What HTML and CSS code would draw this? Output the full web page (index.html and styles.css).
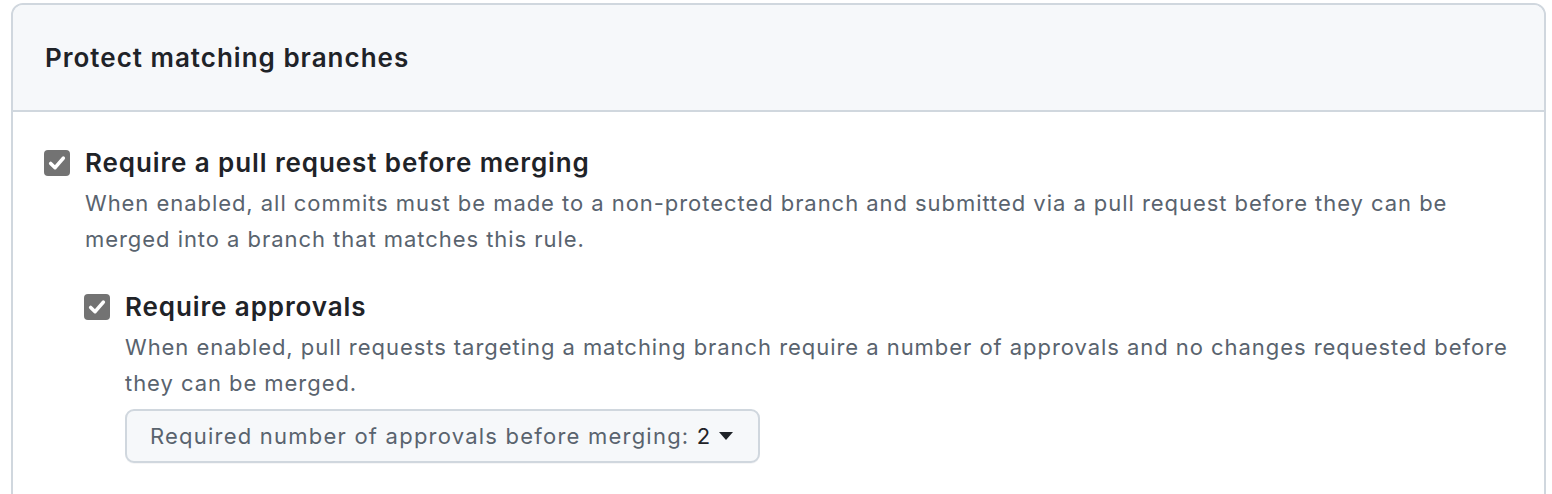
FILE: index.html
```html
<!DOCTYPE html>
<html>
<head>
<meta charset="utf-8">
<link rel="stylesheet" href="styles.css">
</head>
<body>
<div class="box">
  <div class="box-header">
    <h3 class="box-title">Protect matching branches</h3>
  </div>
  <div class="box-body">
    <div class="option">
      <div class="check-row">
        <span class="checkbox"><svg viewBox="0 0 16 16" width="22" height="22"><path d="M3.4 8.3 6.6 11.4 12.6 4.4" fill="none" stroke="#fff" stroke-width="2.6" stroke-linecap="round" stroke-linejoin="round"/></svg></span>
        <span class="option-label">Require a pull request before merging</span>
      </div>
      <p class="note">When enabled, all commits must be made to a non-protected branch and submitted via a pull request before they can be merged into a branch that matches this rule.</p>
      <div class="option nested">
        <div class="check-row">
          <span class="checkbox"><svg viewBox="0 0 16 16" width="22" height="22"><path d="M3.4 8.3 6.6 11.4 12.6 4.4" fill="none" stroke="#fff" stroke-width="2.6" stroke-linecap="round" stroke-linejoin="round"/></svg></span>
          <span class="option-label">Require approvals</span>
        </div>
        <p class="note">When enabled, pull requests targeting a matching branch require a number of approvals and no changes requested before they can be merged.</p>
        <button class="select-btn" type="button"><span class="btn-text">Required number of approvals before merging: <span class="val">2</span></span><span class="caret"></span></button>
      </div>
    </div>
  </div>
</div>
</body>
</html>
```

FILE: styles.css
```css
* { box-sizing: border-box; }
html, body { margin: 0; padding: 0; background: #fff; }
body {
  font-family: Inter, "Noto Sans", "Liberation Sans", sans-serif;
  color: #1f2328;
  overflow: hidden;
}
.box {
  margin: 3px 0 0 11px;
  width: 1535px;
  height: 600px;
  border: 2px solid #d0d7de;
  border-radius: 12px;
  overflow: hidden;
}
.box-header {
  background: #f6f8fa;
  border-bottom: 2px solid #d0d7de;
  height: 107px;
  display: flex;
  align-items: center;
  padding-left: 32px;
}
.box-title {
  margin: 0;
  font-size: 26px;
  font-weight: 600;
  line-height: 36px;
  letter-spacing: 1px;
}
.box-body {
  padding: 33px 20px 0 31px;
}
.check-row {
  display: flex;
  align-items: center;
  gap: 15px;
  height: 36px;
}
.checkbox {
  width: 26px;
  height: 26px;
  border-radius: 4px;
  background: #737373;
  display: flex;
  align-items: center;
  justify-content: center;
  flex: none;
}
.option-label {
  font-size: 26px;
  font-weight: 600;
  line-height: 36px;
  letter-spacing: 0.9px;
}
.note {
  margin: 4px 0 0 41px;
  font-size: 22px;
  line-height: 36px;
  letter-spacing: 0.95px;
  color: #59636e;
}
.nested {
  margin: 32px 0 0 40px;
}
.select-btn {
  margin: 8px 0 0 41px;
  height: 54px;
  padding: 0 25px 0 23px;
  font-family: inherit;
  font-size: 22px;
  letter-spacing: 1.22px;
  color: #59636e;
  background: #f6f8fa;
  border: 2px solid #d0d7de;
  border-radius: 9px;
  box-shadow: 0 1px 0 rgba(31,35,40,0.04);
  display: flex;
  align-items: center;
}
.btn-text { white-space: nowrap; }
.val { color: #1f2328; }
.caret {
  margin-left: 8px;
  width: 0; height: 0;
  border-left: 7px solid transparent;
  border-right: 7px solid transparent;
  border-top: 8px solid #1f2328;
}
```
